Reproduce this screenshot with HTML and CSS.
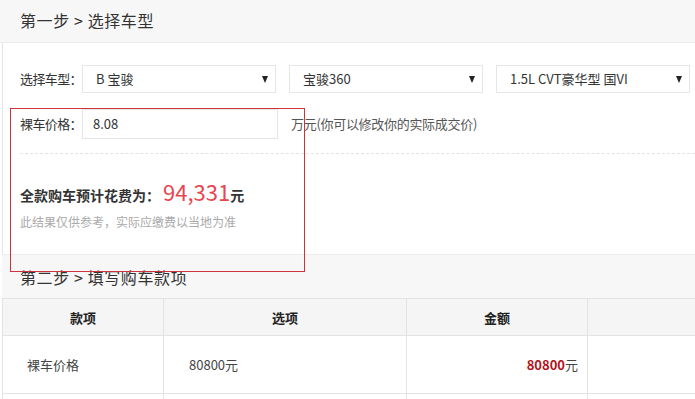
FILE: index.html
```html
<!DOCTYPE html>
<html lang="zh">
<head>
<meta charset="utf-8">
<link rel="stylesheet" href="styles.css">
</head>
<body>
<div class="page">
  <div class="step-head step-one">第一步 &gt; 选择车型</div>
  <div class="panel">
    <div class="row select-row">
      <span class="label">选择车型：</span>
      <div class="select"><span>B 宝骏</span><i class="arrow"></i></div>
      <div class="select"><span>宝骏360</span><i class="arrow"></i></div>
      <div class="select"><span>1.5L CVT豪华型 国VI</span><i class="arrow"></i></div>
    </div>
    <div class="row price-row">
      <span class="label">裸车价格：</span>
      <div class="input">8.08</div>
      <span class="hint">万元(你可以修改你的实际成交价)</span>
    </div>
    <div class="dash"></div>
    <div class="total">全款购车预计花费为：<span class="num">94,331</span>元</div>
    <div class="note">此结果仅供参考，实际应缴费以当地为准</div>
  </div>
  <div class="step-head step-two">第二步 &gt; 填写购车款项</div>
  <table class="fees">
    <thead>
      <tr><th class="c1">款项</th><th class="c2">选项</th><th class="c3">金额</th><th class="c4"></th></tr>
    </thead>
    <tbody>
      <tr><td class="c1 name">裸车价格</td><td class="c2 opt">80800元</td><td class="c3 amt"><b>80800</b>元</td><td class="c4"></td></tr>
      <tr class="next"><td></td><td></td><td></td><td></td></tr>
    </tbody>
  </table>
  <div class="mark"></div>
</div>
</body>
</html>
```

FILE: styles.css
```css
* { box-sizing: border-box; }
html, body { margin: 0; padding: 0; background: #fff; }
body {
  font-family: "Noto Sans CJK SC", "Noto Sans", sans-serif;
  color: #333;
  width: 695px;
  height: 399px;
  overflow: hidden;
}
.page { position: relative; width: 695px; }
.step-head {
  background: #f7f7f7;
  font-size: 16px;
  color: #333;
  padding-left: 20px;
  white-space: pre;
  letter-spacing: 0.6px;
}
.step-one {
  height: 43px;
  line-height: 40px;
  border-bottom: 1px solid #ececec;
}
.panel {
  margin-left: 2px;
  border-left: 1px solid #e6e6e6;
  padding: 22px 0 0 17px;
  height: 211px;
}
.row { display: flex; align-items: center; }
.label {
  width: 62px;
  font-size: 13px;
  line-height: 18px;
  color: #333;
  flex: none;
  white-space: nowrap;
  letter-spacing: -0.6px;
}
.select {
  width: 194px;
  height: 28px;
  border: 1px solid #e6e6e6;
  margin-right: 13px;
  display: flex;
  align-items: center;
  justify-content: space-between;
  padding: 0 7px 0 13px;
  font-size: 13px;
  line-height: 18px;
  color: #333;
  flex: none;
}
.select:last-child { margin-right: 0; }
.arrow {
  width: 0; height: 0;
  border-left: 3.5px solid transparent;
  border-right: 3.5px solid transparent;
  border-top: 7px solid #222;
}
.price-row { margin-top: 16px; }
.input {
  width: 196px;
  height: 30px;
  border: 1px solid #e6e6e6;
  padding-left: 10px;
  line-height: 28px;
  font-size: 13px;
  color: #333;
  flex: none;
}
.hint { margin-left: 13px; font-size: 13px; line-height: 18px; color: #555; white-space: nowrap; letter-spacing: -0.3px; }
.dash {
  margin-top: 14px;
  border-top: 1px dashed #e3e3e3;
}
.total {
  margin-top: 22px;
  font-size: 14px;
  font-weight: bold;
  color: #333;
  display: flex;
  align-items: baseline;
  height: 30px;
  line-height: 30px;
}
.total .num {
  font-size: 22px;
  font-weight: normal;
  color: #e8454e;
  margin-left: 3px;
}
.note { margin-top: 7px; font-size: 12px; line-height: 18px; color: #aaa; }
.step-two {
  height: 44px;
  line-height: 44px;
  border-top: 1px solid #ececec;
  margin-left: 2px;
  padding-left: 18px;
}
.fees {
  margin-left: 2px;
  width: 693px;
  border-collapse: collapse;
  table-layout: fixed;
  font-size: 13px;
}
.fees th, .fees td { border: 1px solid #e3e3e3; }
.fees th {
  background: #f5f5f5;
  height: 37px;
  font-weight: bold;
  color: #222;
}
.c1 { width: 161px; }
.c2 { width: 243px; }
.c3 { width: 181px; }
.c4 { width: 108px; }
.fees td { height: 58px; color: #444; }
.name { padding-left: 24px; }
.opt { padding-left: 25px; }
.amt { text-align: right; padding-right: 9px; }
.amt b { color: #b5121b; }
.mark {
  position: absolute;
  left: 10px;
  top: 108px;
  width: 295px;
  height: 164px;
  border: 1px solid #c9343d;
}
```
